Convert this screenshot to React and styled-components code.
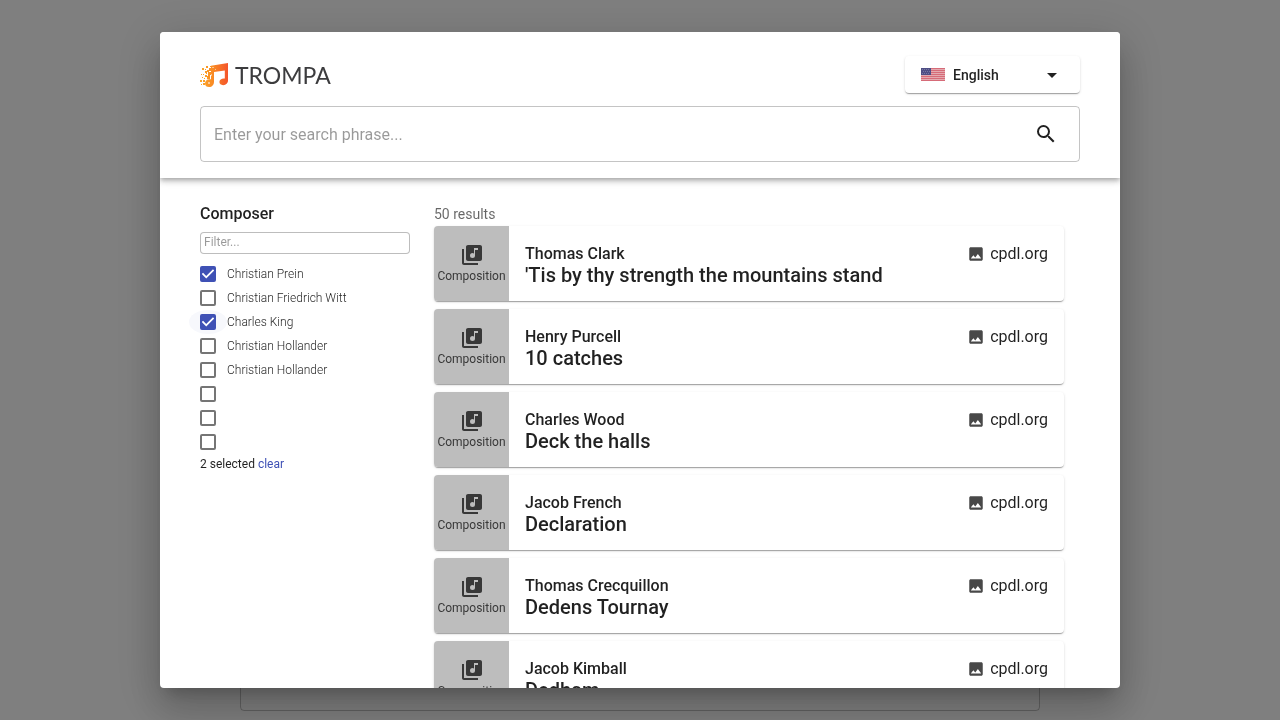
import React, { useState } from "react";
import styled, { createGlobalStyle } from "styled-components";
import { MdLibraryMusic, MdImage, MdSearch, MdArrowDropDown } from "react-icons/md";

const GlobalStyle = createGlobalStyle`
  *, *::before, *::after { box-sizing: border-box; }
  body {
    margin: 0;
    background: #fff;
    color: rgba(0, 0, 0, 0.87);
    font-family: Roboto, "Liberation Sans", sans-serif;
    font-size: 16px;
    line-height: 24px;
  }
  button, input, select { font: inherit; color: inherit; }
`;

const Page = styled.div`
  display: flex;
  justify-content: center;
  min-height: 100vh;
  padding: 64px 16px 9px;
`;

const PagePanel = styled.div`
  width: 100%;
  max-width: 800px;
  border: 1px solid rgba(0, 0, 0, 0.23);
  border-radius: 4px;
`;

const Backdrop = styled.div`
  position: fixed;
  inset: 0;
  display: flex;
  justify-content: center;
  padding: 32px;
  background: rgba(0, 0, 0, 0.5);
`;

const Dialog = styled.div`
  display: flex;
  flex-direction: column;
  width: 100%;
  max-width: 960px;
  overflow: hidden;
  background: #fff;
  border-radius: 4px;
  box-shadow: 0 11px 15px -7px rgba(0, 0, 0, 0.2), 0 24px 38px 3px rgba(0, 0, 0, 0.14),
    0 9px 46px 8px rgba(0, 0, 0, 0.12);
`;

const Header = styled.header`
  display: flex;
  flex-direction: column;
  flex: none;
  gap: 13px;
  padding: 24px 40px 16px;
  z-index: 1;
  background: #fff;
  box-shadow: 0 2px 4px -1px rgba(0, 0, 0, 0.2), 0 4px 5px 0 rgba(0, 0, 0, 0.14),
    0 1px 10px 0 rgba(0, 0, 0, 0.12);
`;

const HeaderRow = styled.div`
  display: flex;
  align-items: center;
  justify-content: space-between;
`;

const Brand = styled.div`
  display: flex;
  align-items: center;
  gap: 6px;
  color: #3c3c3e;
  font-family: Lato, sans-serif;
  font-size: 23px;
  line-height: 24px;
`;

const LanguagePicker = styled.label`
  display: flex;
  align-items: center;
  gap: 8px;
  width: 175px;
  height: 37px;
  padding: 0 16px;
  border-radius: 4px;
  background: #fff;
  box-shadow: 0 2px 1px -1px rgba(0, 0, 0, 0.2), 0 1px 1px 0 rgba(0, 0, 0, 0.14),
    0 1px 3px 0 rgba(0, 0, 0, 0.12);
`;

const LanguageSelect = styled.select`
  appearance: none;
  flex: 1;
  min-width: 0;
  padding: 0;
  border: 0;
  background: none;
  font-size: 14px;
  font-weight: 500;
`;

const SearchBox = styled.form`
  display: flex;
  align-items: center;
  height: 56px;
  padding: 0 21px 0 13px;
  border: 1px solid rgba(0, 0, 0, 0.23);
  border-radius: 4px;
`;

const SearchInput = styled.input`
  flex: 1;
  min-width: 0;
  padding: 2px 0 0;
  border: 0;
  outline: 0;
  background: none;
  &::placeholder { color: rgba(0, 0, 0, 0.4); opacity: 1; }
`;

const IconButton = styled.button`
  display: flex;
  padding: 0;
  border: 0;
  background: none;
`;

const Content = styled.div`
  display: flex;
  flex: 1;
  align-items: flex-start;
  gap: 24px;
  min-height: 0;
  padding: 24px 56px 24px 40px;
  overflow-y: auto;
  scrollbar-width: none;
`;

const Sidebar = styled.aside`
  flex: none;
  width: 210px;
`;

const FacetTitle = styled.h2`
  margin: 0 0 6px;
  font-size: 16px;
  font-weight: 500;
  line-height: 24px;
`;

const FilterInput = styled.input`
  display: block;
  width: 100%;
  height: 22px;
  padding: 0 3px 2px;
  border: 1px solid rgba(0, 0, 0, 0.26);
  border-radius: 4px;
  font-size: 12px;
  &::placeholder { color: rgba(0, 0, 0, 0.4); opacity: 1; }
`;

const FacetList = styled.ul`
  margin: 8px 0 0;
  padding: 0;
  list-style: none;
`;

const FacetOption = styled.label`
  display: flex;
  align-items: center;
  gap: 11px;
  height: 24px;
  font-size: 12px;
  font-weight: 300;
`;

const Checkbox = styled.input`
  appearance: none;
  flex: none;
  width: 16px;
  height: 16px;
  margin: 0;
  border: 2px solid rgba(0, 0, 0, 0.54);
  border-radius: 2px;
  box-shadow: ${(p) => (p.$active ? "0 0 0 12px rgba(63, 81, 181, 0.04)" : "none")};
  clip-path: ${(p) => (p.$active ? "ellipse(19px 12px at center)" : "none")};
  &:checked {
    border-color: #3f51b5;
    background: #3f51b5
      url("data:image/svg+xml,%3Csvg xmlns='http://www.w3.org/2000/svg' viewBox='0 0 18 18'%3E%3Cpath fill='white' d='M7 14L2 9l1.41-1.41L7 11.17l7.59-7.59L16 5z'/%3E%3C/svg%3E")
      center / 16px 16px no-repeat;
  }
`;

const Selection = styled.p`
  margin: 0;
  font-size: 12px;
  line-height: 20px;
`;

const ClearButton = styled.button`
  padding: 0;
  border: 0;
  background: none;
  color: #3f51b5;
`;

const Results = styled.main`
  flex: 1;
  min-width: 0;
`;

const ResultCount = styled.p`
  margin: 0;
  color: rgba(0, 0, 0, 0.6);
  font-size: 14px;
  line-height: 24px;
`;

const ResultList = styled.div`
  display: flex;
  flex-direction: column;
  gap: 8px;
`;

const Card = styled.article`
  display: flex;
  height: 75px;
  overflow: hidden;
  border-radius: 4px;
  background: #fff;
  box-shadow: 0 2px 1px -1px rgba(0, 0, 0, 0.2), 0 1px 1px 0 rgba(0, 0, 0, 0.14),
    0 1px 3px 0 rgba(0, 0, 0, 0.12);
`;

const CardType = styled.div`
  display: flex;
  flex: none;
  flex-direction: column;
  align-items: center;
  justify-content: center;
  width: 75px;
  background: #bdbdbd;
  color: #383838;
  font-size: 12px;
  line-height: 18px;
`;

const CardBody = styled.div`
  display: flex;
  flex: 1;
  justify-content: space-between;
  min-width: 0;
  padding: 16px;
`;

const Composer = styled.div`
  font-weight: 500;
`;

const WorkTitle = styled.h3`
  margin: 0;
  font-size: 20px;
  font-weight: 500;
  line-height: 18px;
`;

const Source = styled.div`
  display: flex;
  align-items: center;
  gap: 5px;
  height: 24px;
  svg { color: #484848; }
`;

const notePixels = [
  [2, 6, 2], [6, 4, 2], [9, 6, 3], [5, 9, 2], [1, 12, 1], [8, 10, 3], [5, 13, 2],
  [2, 15, 1], [0, 18, 2], [3, 18, 2], [7, 14, 3], [3, 21, 2], [10, 4, 1], [1, 22, 1],
  [5, 7, 1], [7, 8, 2], [3, 12, 1], [6, 11, 1], [8, 12, 2], [4, 16, 1],
];

function LogoMark() {
  return (
    <svg width="29" height="26" viewBox="0 0 29 26" aria-hidden="true">
      <defs>
        <linearGradient id="note" x1="0" y1="0" x2="29" y2="0" gradientUnits="userSpaceOnUse">
          <stop offset="0" stopColor="#fbaa2a" />
          <stop offset="0.45" stopColor="#f98a24" />
          <stop offset="1" stopColor="#f4512c" />
        </linearGradient>
      </defs>
      <g fill="url(#note)">
        <path d="M11 3.8L28 1v17.6c0 2.5-2 4.6-4.8 4.6-2.3 0-3.8-1.4-3.8-3.1 0-2.1 2-3.5 4.4-3.5h1V8.4L14 10v9.7c0 3.1-2 5.3-4.9 5.3-2.4 0-4.1-1.4-4.1-3.6 0-2.3 1.9-4.2 4.3-4.2H11z" />
        {notePixels.map(([x, y, s]) => (
          <rect key={`${x}-${y}`} x={x} y={y} width={s} height={s} />
        ))}
      </g>
      <g fill="#fff" opacity="0.5">
        <rect x="12" y="5" width="2" height="1" />
        <rect x="15" y="7" width="1" height="1" />
        <rect x="11" y="12" width="1" height="2" />
        <rect x="8" y="20" width="2" height="2" />
      </g>
    </svg>
  );
}

function Flag() {
  return (
    <svg width="24" height="13" viewBox="0 0 24 13" aria-hidden="true">
      <rect width="24" height="13" fill="#e4a9af" />
      {[0, 2, 4, 6, 8, 10, 12].map((y) => (
        <rect key={y} y={y} width="24" height="1" fill="#d66b78" />
      ))}
      <rect width="10" height="7" fill="#4f4e85" />
      <g fill="#7776a3">
        {[1, 3, 5].map((y) => [1, 3, 5, 7].map((x) => (
          <rect key={`${x}-${y}`} x={x + (y === 3 ? 1 : 0)} y={y} width="1" height="1" />
        )))}
      </g>
    </svg>
  );
}

const composers = [
  { name: "Christian Prein", checked: true },
  { name: "Christian Friedrich Witt" },
  { name: "Charles King", checked: true, active: true },
  { name: "Christian Hollander" },
  { name: "Christian Hollander" },
  { name: "" },
  { name: "" },
  { name: "" },
];

const works = [
  ["Thomas Clark", "'Tis by thy strength the mountains stand"],
  ["Henry Purcell", "10 catches"],
  ["Charles Wood", "Deck the halls"],
  ["Jacob French", "Declaration"],
  ["Thomas Crecquillon", "Dedens Tournay"],
  ["Jacob Kimball", "Dedham"],
];

export default function App() {
  const [checked, setChecked] = useState(composers.map((c) => Boolean(c.checked)));
  const toggle = (i) => setChecked(checked.map((v, n) => (n === i ? !v : v)));

  return (
    <>
      <GlobalStyle />
      <Page>
        <PagePanel />
      </Page>
      <Backdrop>
        <Dialog role="dialog" aria-modal="true" aria-label="Search">
          <Header>
            <HeaderRow>
              <Brand>
                <LogoMark />
                TROMPA
              </Brand>
              <LanguagePicker>
                <Flag />
                <LanguageSelect aria-label="Language">
                  <option>English</option>
                </LanguageSelect>
                <MdArrowDropDown size={24} />
              </LanguagePicker>
            </HeaderRow>
            <SearchBox onSubmit={(e) => e.preventDefault()}>
              <SearchInput aria-label="Search phrase" placeholder="Enter your search phrase..." />
              <IconButton aria-label="Search">
                <MdSearch size={24} />
              </IconButton>
            </SearchBox>
          </Header>
          <Content>
            <Sidebar>
              <FacetTitle>Composer</FacetTitle>
              <FilterInput aria-label="Filter composers" placeholder="Filter..." />
              <FacetList>
                {composers.map((c, i) => (
                  <li key={i}>
                    <FacetOption>
                      <Checkbox
                        type="checkbox"
                        aria-label={c.name || "Unnamed composer"}
                        checked={checked[i]}
                        onChange={() => toggle(i)}
                        $active={c.active}
                      />
                      {c.name}
                    </FacetOption>
                  </li>
                ))}
              </FacetList>
              <Selection>
                {checked.filter(Boolean).length} selected{" "}
                <ClearButton type="button" onClick={() => setChecked(checked.map(() => false))}>
                  clear
                </ClearButton>
              </Selection>
            </Sidebar>
            <Results>
              <ResultCount>50 results</ResultCount>
              <ResultList>
                {works.map(([composer, title]) => (
                  <Card key={title}>
                    <CardType>
                      <MdLibraryMusic size={24} />
                      Composition
                    </CardType>
                    <CardBody>
                      <div>
                        <Composer>{composer}</Composer>
                        <WorkTitle>{title}</WorkTitle>
                      </div>
                      <Source>
                        <MdImage size={18} />
                        cpdl.org
                      </Source>
                    </CardBody>
                  </Card>
                ))}
              </ResultList>
            </Results>
          </Content>
        </Dialog>
      </Backdrop>
    </>
  );
}
